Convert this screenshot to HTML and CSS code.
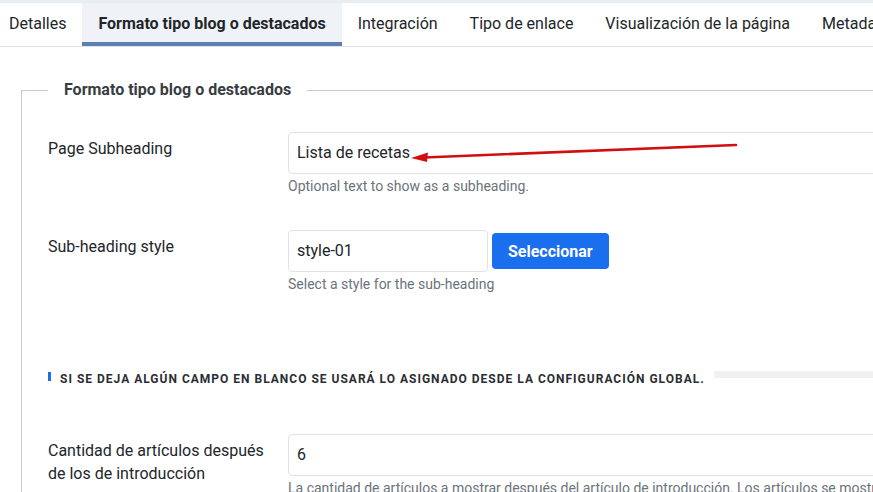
FILE: index.html
```html
<!DOCTYPE html>
<html lang="es">
<head>
<meta charset="utf-8">
<title>Formato tipo blog o destacados</title>
<link rel="stylesheet" href="styles.css">
</head>
<body>
<div class="page">
  <div class="topstrip"></div>
  <nav class="tabs">
    <span class="tab">Detalles</span>
    <span class="tab active">Formato tipo blog o destacados</span>
    <span class="tab">Integración</span>
    <span class="tab">Tipo de enlace</span>
    <span class="tab">Visualización de la página</span>
    <span class="tab">Metadatos</span>
  </nav>
  <div class="content">
    <fieldset class="group">
      <legend>Formato tipo blog o destacados</legend>
      <div class="row row1">
        <div class="label">Page Subheading</div>
        <div class="control">
          <div class="input wide">Lista de recetas</div>
          <div class="help">Optional text to show as a subheading.</div>
        </div>
      </div>
      <div class="row row2">
        <div class="label">Sub-heading style</div>
        <div class="control">
          <div class="inline">
            <div class="input short">style-01</div>
            <button class="btn">Seleccionar</button>
          </div>
          <div class="help">Select a style for the sub-heading</div>
        </div>
      </div>
      <div class="note">
        <span class="note-mark"></span>
        <span class="note-text">Si se deja algún campo en blanco se usará lo asignado desde la configuración global.</span>
        <span class="note-rule"></span>
      </div>
      <div class="row row3">
        <div class="label">Cantidad de artículos después de los de introducción</div>
        <div class="control">
          <div class="input wide">6</div>
          <div class="help">La cantidad de artículos a mostrar después del artículo de introducción. Los artículos se mostrarán como enlaces.</div>
        </div>
      </div>
    </fieldset>
  </div>
  <svg class="arrow" width="873" height="492" viewBox="0 0 873 492">
    <line x1="736" y1="145" x2="424" y2="157.5" stroke="#d01010" stroke-width="2.6" stroke-linecap="round"/>
    <polygon points="411,158 428,152.5 427,162" fill="#d01010"/>
  </svg>
</div>
</body>
</html>
```
FILE: styles.css
```css
* { box-sizing: border-box; }
html, body { margin: 0; padding: 0; background: #fff; }
body {
  font-family: Roboto, "Liberation Sans", Arial, sans-serif;
  color: #22262a;
  width: 873px;
  height: 492px;
  overflow: hidden;
}
.page { position: relative; width: 873px; height: 492px; overflow: hidden; }
.topstrip { height: 3px; background: #e8edf2; }
.tabs {
  display: flex;
  white-space: nowrap;
  height: 44px;
  border-bottom: 1px solid #dfe3e8;
  margin-left: -7px;
}
.tab {
  padding: 0 16px;
  font-size: 16px;
  line-height: 41px;
  color: #22262a;
  border-bottom: 4px solid transparent;
  height: 43px;
}
.tab.active {
  font-weight: 700;
  background: #eff3f7;
  border-bottom-color: #5b7fae;
}
.content { padding: 33px 0 0 21px; width: 1100px; }
.group {
  margin: 0;
  border: 1px solid #c6ccd3;
  border-right: none;
  border-bottom: none;
  padding: 18px 0 0 26px;
  min-width: 0;
}
.group legend {
  font-weight: 700;
  font-size: 16px;
  color: #383d42;
  padding: 0 16px;
  margin-left: 0;
  line-height: 20px;
}
.row { display: flex; }
.label {
  width: 240px;
  flex: none;
  font-size: 16px;
  line-height: 23px;
  padding-top: 5px;
  padding-right: 20px;
  color: #22262a;
}
.control { flex: none; width: 700px; }
.input {
  height: 42px;
  border: 1px solid #dfe3e7;
  border-radius: 4px;
  padding: 0 8px;
  font-size: 16px;
  line-height: 40px;
  color: #22262a;
}
.input.wide { width: 700px; }
.input.short { width: 200px; }
.inline { display: flex; align-items: center; gap: 4px; }
.btn {
  font-family: inherit;
  font-weight: 700;
  font-size: 16px;
  color: #fff;
  background: #1a6fef;
  border: none;
  border-radius: 4px;
  height: 36px;
  padding: 0 16px;
}
.help {
  font-size: 14px;
  color: #6b737b;
  margin-top: 2px;
  line-height: 20px;
  white-space: nowrap;
}
.row1 { margin-top: 14px; }
.row2 { margin-top: 34px; }
.note {
  display: flex;
  align-items: flex-start;
  margin-top: 75px;
  height: 20px;
}
.note-mark { width: 3px; height: 9px; background: #1a6fef; margin-top: 3px; }
.note-text {
  margin-left: 9px;
  font-size: 12px;
  line-height: 20px;
  font-weight: 700;
  letter-spacing: 1px;
  text-transform: uppercase;
  color: #2a2e33;
  white-space: nowrap;
}
.note-rule {
  margin-left: 9px;
  width: 300px;
  height: 7px;
  background: #f1f1f1;
  margin-top: 2px;
}
.row3 { margin-top: 45px; }
.arrow { position: absolute; left: 0; top: 0; pointer-events: none; }
```
